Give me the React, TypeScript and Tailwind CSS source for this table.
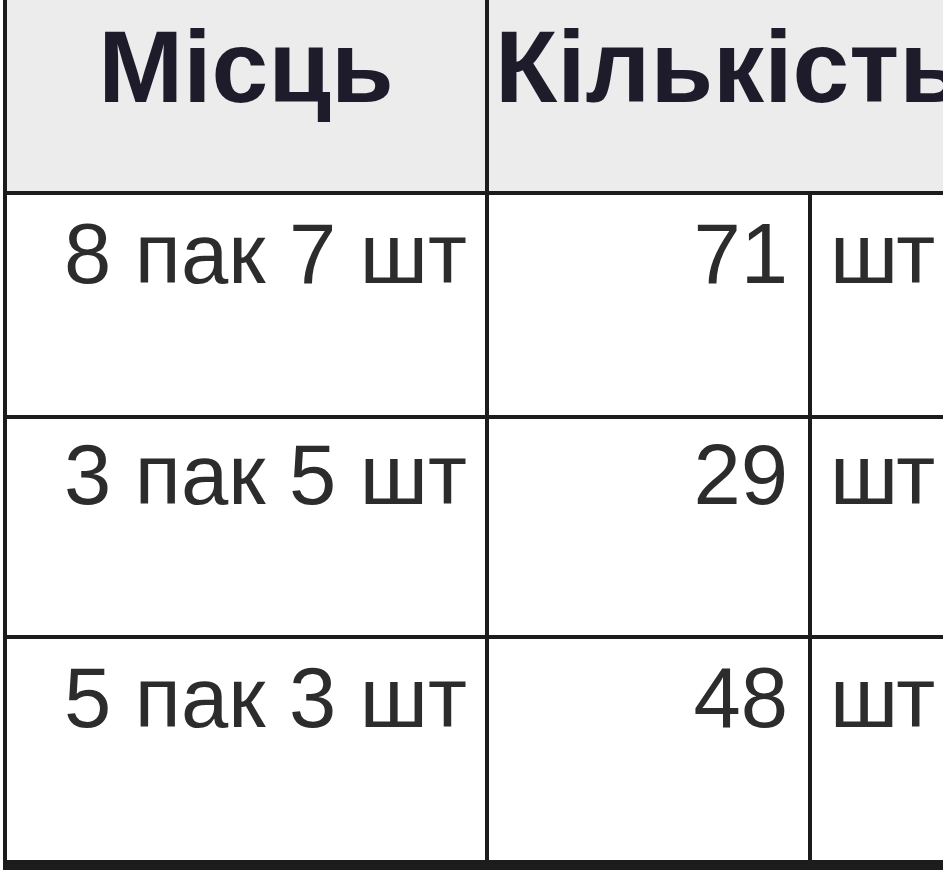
import React from "react";

const rows = [
  { place: "8 пак 7 шт", qty: "71", unit: "шт", h: "h-[224px]", border: "border-b-4", mt: "mt-[16px]" },
  { place: "3 пак 5 шт", qty: "29", unit: "шт", h: "h-[220px]", border: "border-b-4", mt: "mt-[13px]" },
  { place: "5 пак 3 шт", qty: "48", unit: "шт", h: "h-[231px]", border: "border-b-[10px]", mt: "mt-[16px]" },
];

export default function App() {
  return (
    <div
      className="w-[943px] h-[887px] overflow-hidden bg-white"
      style={{ fontFamily: '"Liberation Sans", Arial, sans-serif' }}
    >
      <div className="ml-[3px] w-[1200px] border-l-4 border-[#1c1c1c] flex flex-col">
        {/* header */}
        <div className="flex h-[195px] border-b-4 border-[#1c1c1c] bg-[#ececec]">
          <div className="w-[482px] border-r-4 border-[#1c1c1c] flex justify-center">
            <span className="mt-[16px] text-[102px] leading-none font-bold text-[#1e1c2b] whitespace-nowrap">
              Місць
            </span>
          </div>
          <div className="flex-1 pl-[6px]">
            <span className="block mt-[16px] text-[102px] leading-none font-bold text-[#1e1c2b] whitespace-nowrap">
              Кількість
            </span>
          </div>
        </div>
        {rows.map((r) => (
          <div key={r.place} className={`flex ${r.h} ${r.border} border-[#1c1c1c] bg-white`}>
            <div className="w-[482px] border-r-4 border-[#1c1c1c] flex items-start justify-end pr-[18px]">
              <span className={`${r.mt} text-[85px] leading-none text-[#2c2c2c] whitespace-nowrap`}>
                {r.place}
              </span>
            </div>
            <div className="w-[323px] border-r-4 border-[#1c1c1c] flex items-start justify-end pr-[20px]">
              <span className={`${r.mt} text-[85px] leading-none text-[#2c2c2c] whitespace-nowrap`}>
                {r.qty}
              </span>
            </div>
            <div className="flex-1 pl-[18px]">
              <span className={`block ${r.mt} text-[85px] leading-none text-[#2c2c2c] whitespace-nowrap tracking-[-2px]`}>
                {r.unit}
              </span>
            </div>
          </div>
        ))}
      </div>
    </div>
  );
}
